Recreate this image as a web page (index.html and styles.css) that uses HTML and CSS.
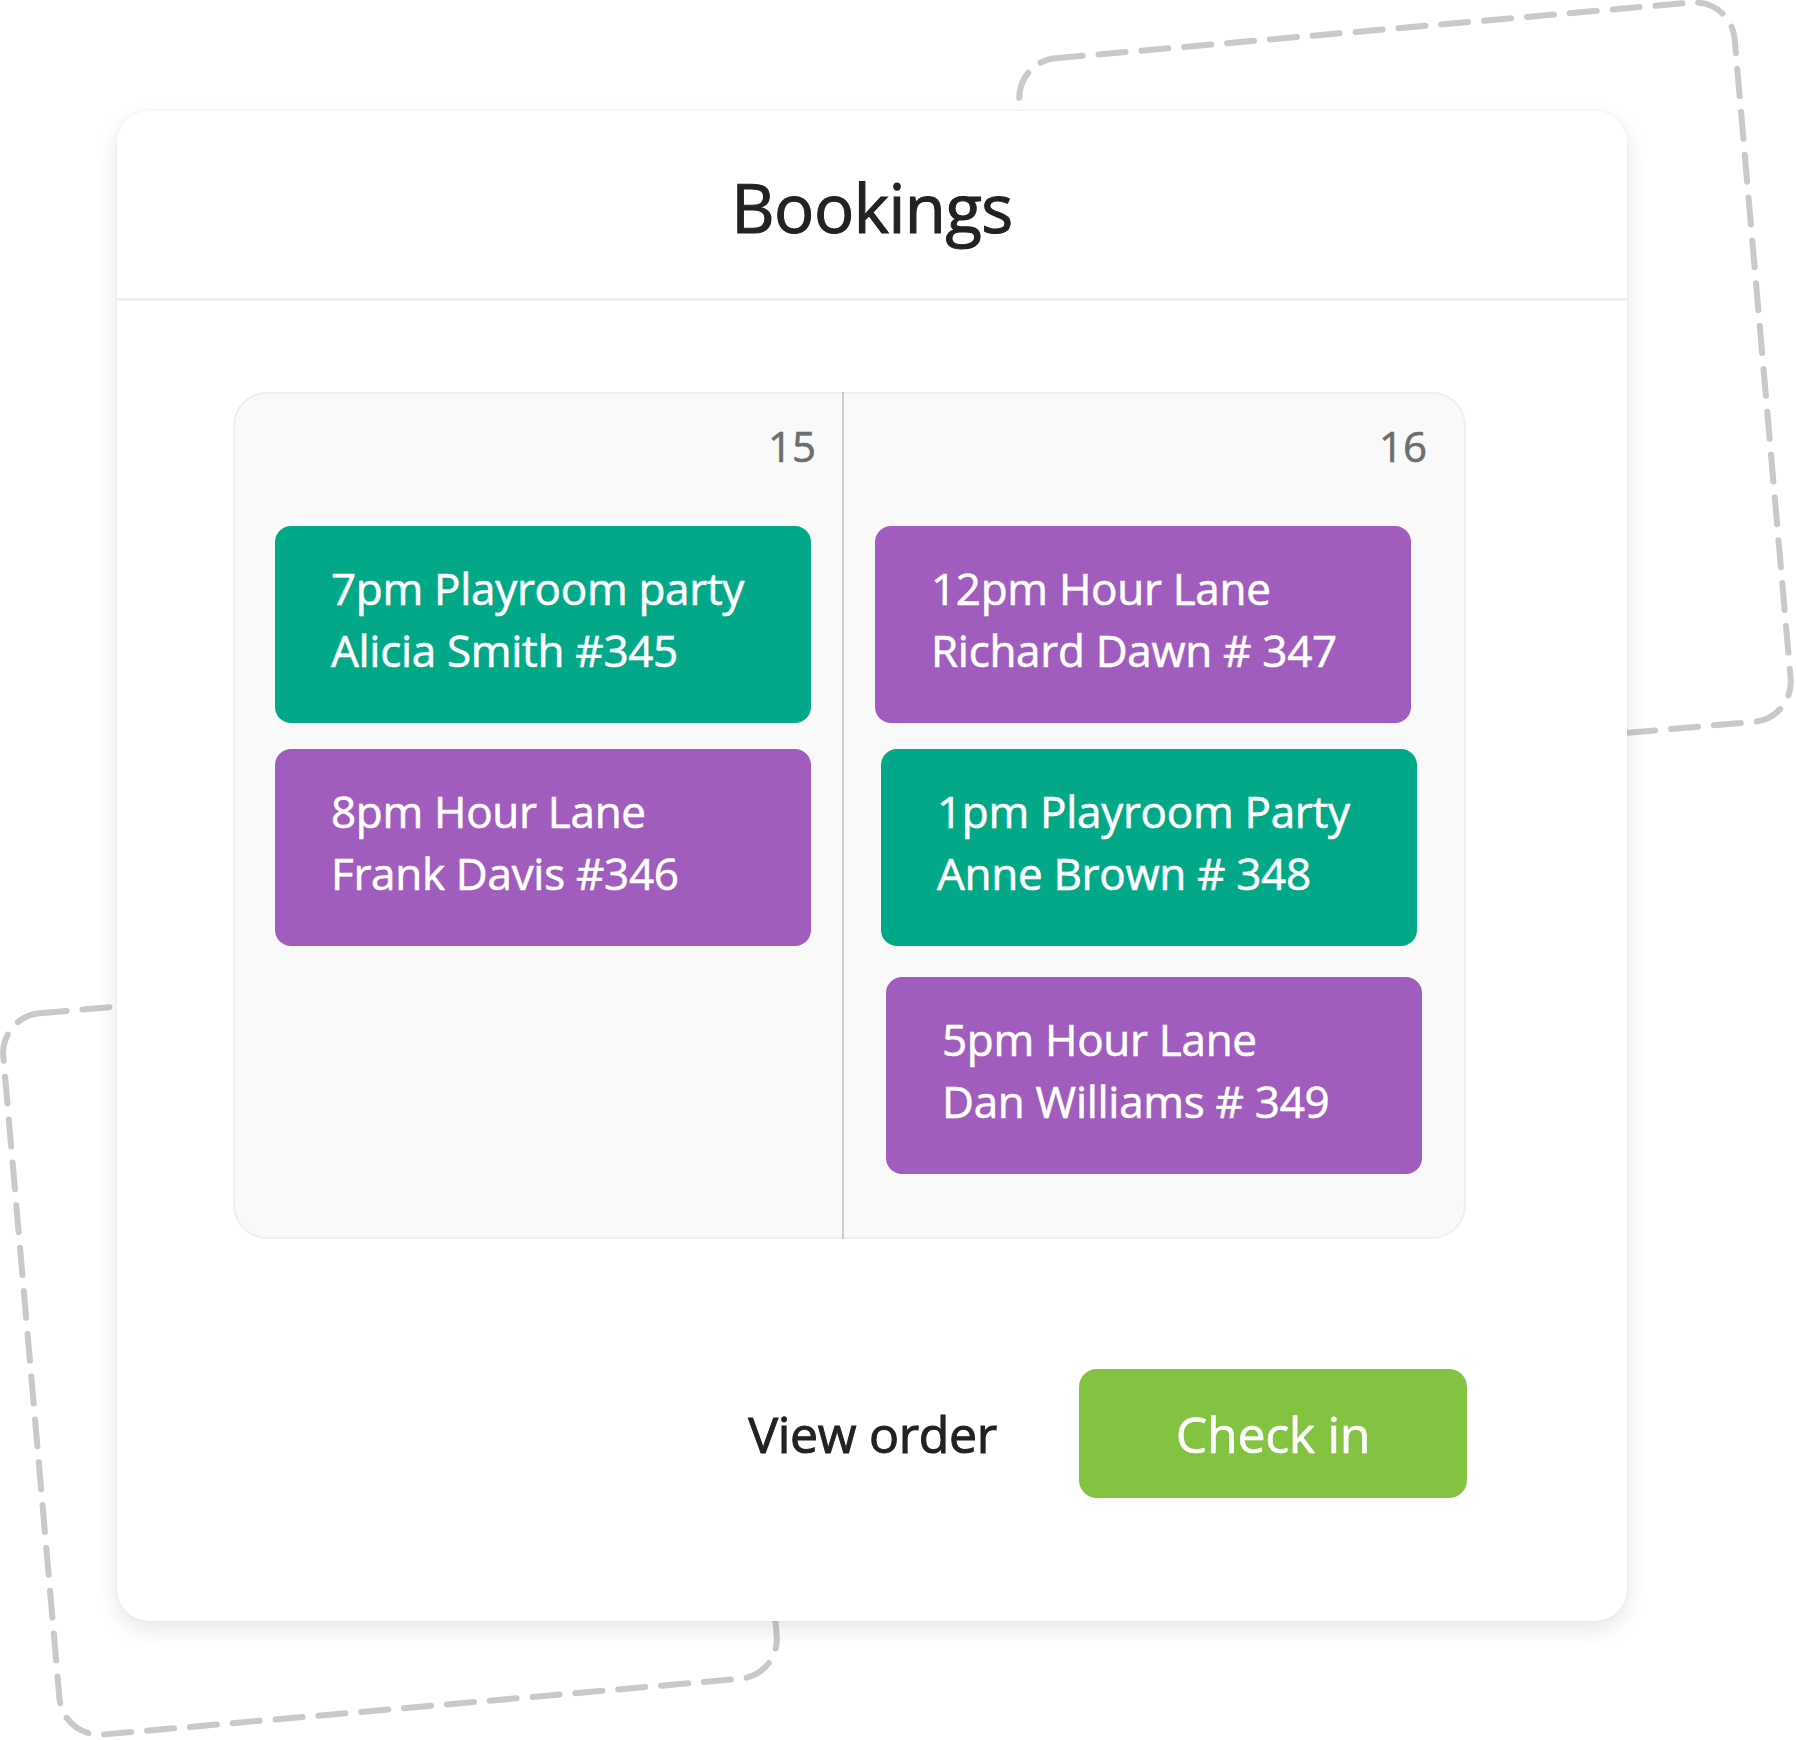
FILE: index.html
```html
<!DOCTYPE html>
<html lang="en">
<head>
<meta charset="utf-8">
<title>Bookings</title>
<link rel="stylesheet" href="styles.css">
</head>
<body>
<div class="stage">
  <svg class="frames" width="1796" height="1740" viewBox="0 0 1796 1740" aria-hidden="true">
    <rect class="frame" x="-359" y="-361" width="718" height="722" rx="40" transform="translate(1405 390) rotate(-5)"/>
    <rect class="frame" x="-360" y="-362" width="720" height="724" rx="40" transform="translate(390 1346) rotate(-5)"/>
  </svg>
  <section class="card">
    <header class="card-header">
      <h1 class="title">Bookings</h1>
    </header>
    <div class="calendar">
      <div class="day day-left">
        <div class="day-num">15</div>
        <div class="events">
          <div class="event teal">7pm Playroom party<br>Alicia Smith #345</div>
          <div class="event purple">8pm Hour Lane<br>Frank Davis #346</div>
        </div>
      </div>
      <div class="col-divider"></div>
      <div class="day day-right">
        <div class="day-num">16</div>
        <div class="events">
          <div class="event purple">12pm Hour Lane<br>Richard Dawn # 347</div>
          <div class="event teal shift1">1pm Playroom Party<br>Anne Brown # 348</div>
          <div class="event purple shift2">5pm Hour Lane<br>Dan Williams # 349</div>
        </div>
      </div>
    </div>
    <div class="actions">
      <span class="link">View order</span>
      <span class="btn">Check in</span>
    </div>
  </section>
</div>
</body>
</html>
```
FILE: styles.css
```css
* { box-sizing: border-box; }
html, body { margin: 0; padding: 0; background: #ffffff; }
body { font-family: "Open Sans", "Liberation Sans", sans-serif; }

.stage {
  position: relative;
  width: 1796px;
  height: 1740px;
  overflow: hidden;
  padding: 111px 0 0 117px;
}

.frames {
  position: absolute;
  left: 0;
  top: 0;
}
.frame {
  fill: none;
  stroke: #c9c9cb;
  stroke-width: 6;
  stroke-dasharray: 27 16;
  stroke-linecap: round;
}

.card {
  position: relative;
  width: 1510px;
  height: 1510px;
  background: #ffffff;
  border-radius: 32px;
  box-shadow: 0 0 3px rgba(0,0,0,0.06), 0 8px 22px rgba(0,0,0,0.10);
}

.card-header {
  height: 190px;
  border-bottom: 3px solid #efefef;
  padding-top: 63px;
}
.title {
  margin: 0;
  text-align: center;
  font-size: 67px;
  line-height: 67px;
  font-weight: 400;
  color: #222222;
  letter-spacing: -0.5px;
  -webkit-text-stroke: 1.1px #222222;
}

.calendar {
  margin: 91px 0 0 116px;
  width: 1233px;
  height: 847px;
  background: #f9f9f9;
  border: 2px solid #efefef;
  border-radius: 34px;
  display: grid;
  grid-template-columns: 607px 2px 1fr;
}
.col-divider {
  background: #cccccc;
  margin-top: -2px;
  margin-bottom: -2px;
}

.day-num {
  font-size: 42px;
  line-height: 50px;
  color: #6e6e6e;
  text-align: right;
  padding-top: 27px;
  -webkit-text-stroke: 0.6px #6e6e6e;
}
.day-left .day-num { padding-right: 26px; }
.day-right .day-num { padding-right: 37px; }

.events {
  display: flex;
  flex-direction: column;
  gap: 26px;
  margin-top: 55px;
}
.day-left .events { padding-left: 40px; }
.day-right .events { padding-left: 31px; }

.event {
  width: 536px;
  height: 197px;
  border-radius: 16px;
  color: #ffffff;
  font-size: 44px;
  line-height: 62px;
  padding: 31px 0 0 56px;
  letter-spacing: -0.3px;
  -webkit-text-stroke: 0.6px #ffffff;
}
.teal { background: #02a887; }
.purple { background: #a05dbe; }
.shift1 { margin-left: 6px; }
.shift2 { margin-left: 11px; margin-top: 5px; }

.actions {
  display: flex;
  justify-content: flex-end;
  align-items: center;
  gap: 82px;
  margin-top: 130px;
  padding-right: 160px;
}
.link {
  font-size: 50px;
  font-weight: 400;
  color: #222222;
  letter-spacing: -0.3px;
  -webkit-text-stroke: 1px #222222;
}
.btn {
  width: 388px;
  height: 129px;
  border-radius: 18px;
  background: #83c341;
  color: #ffffff;
  font-size: 50px;
  display: flex;
  align-items: center;
  justify-content: center;
  letter-spacing: -0.3px;
  -webkit-text-stroke: 0.6px #ffffff;
}
```
